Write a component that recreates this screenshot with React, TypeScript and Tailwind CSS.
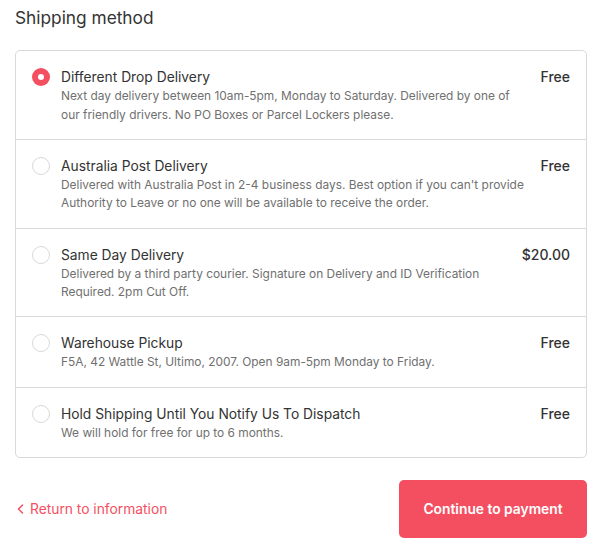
import React from "react";

const rows = [
  {
    title: "Different Drop Delivery",
    desc: "Next day delivery between 10am-5pm, Monday to Saturday. Delivered by one of our friendly drivers. No PO Boxes or Parcel Lockers please.",
    price: "Free",
    selected: true,
  },
  {
    title: "Australia Post Delivery",
    desc: "Delivered with Australia Post in 2-4 business days. Best option if you can't provide Authority to Leave or no one will be available to receive the order.",
    price: "Free",
  },
  {
    title: "Same Day Delivery",
    desc: "Delivered by a third party courier. Signature on Delivery and ID Verification Required. 2pm Cut Off.",
    price: "$20.00",
  },
  {
    title: "Warehouse Pickup",
    desc: "F5A, 42 Wattle St, Ultimo, 2007. Open 9am-5pm Monday to Friday.",
    price: "Free",
  },
  {
    title: "Hold Shipping Until You Notify Us To Dispatch",
    desc: "We will hold for free for up to 6 months.",
    price: "Free",
  },
];

export default function App() {
  return (
    <div
      className="w-[607px] h-[548px] bg-white pl-[15px] pr-[20px] text-[#333333]"
      style={{ fontFamily: "Inter, 'Noto Sans', sans-serif" }}
    >
      <h2 className="text-[17.3px] leading-[36px] text-[#333333] font-normal">Shipping method</h2>
      <div className="mt-[14px] border border-[#d9d9d9] rounded-[5px]">
        {rows.map((r, i) => (
          <div
            key={i}
            className={`flex items-start pl-[16px] pr-[16px] pt-[16px] pb-[14.8px] ${i > 0 ? "border-t border-[#d9d9d9]" : ""}`}
          >
            <div className="h-[20px] flex items-center shrink-0">
              {r.selected ? (
                <div className="w-[18px] h-[18px] rounded-full bg-[#f44f61] flex items-center justify-center">
                  <div className="w-[6px] h-[6px] rounded-full bg-white" />
                </div>
              ) : (
                <div className="w-[18px] h-[18px] rounded-full border border-[#d9d9d9] bg-white" />
              )}
            </div>
            <div className="ml-[11px] flex-1 min-w-0">
              <div className="text-[13.8px] leading-[20px] text-[#333333]">{r.title}</div>
              <div className="text-[11.9px] leading-[18.5px] text-[#707070] max-w-[470px]">{r.desc}</div>
            </div>
            <div className="text-[14px] leading-[20px] font-medium text-[#333333] ml-2 shrink-0">{r.price}</div>
          </div>
        ))}
      </div>
      <div className="mt-[22px] flex items-center justify-between">
        <a className="flex items-center gap-[6px] text-[13.8px] text-[#f44f61] pl-[2px]" href="#">
          <svg width="7" height="12" viewBox="0 0 7 12" fill="none">
            <path d="M5.5 2L1.5 6l4 4" stroke="#f44f61" strokeWidth="1.5" strokeLinecap="round" strokeLinejoin="round" />
          </svg>
          Return to information
        </a>
        <button className="w-[188px] h-[58px] rounded-[5px] bg-[#f44f61] text-white text-[13.8px] font-semibold">
          Continue to payment
        </button>
      </div>
    </div>
  );
}
